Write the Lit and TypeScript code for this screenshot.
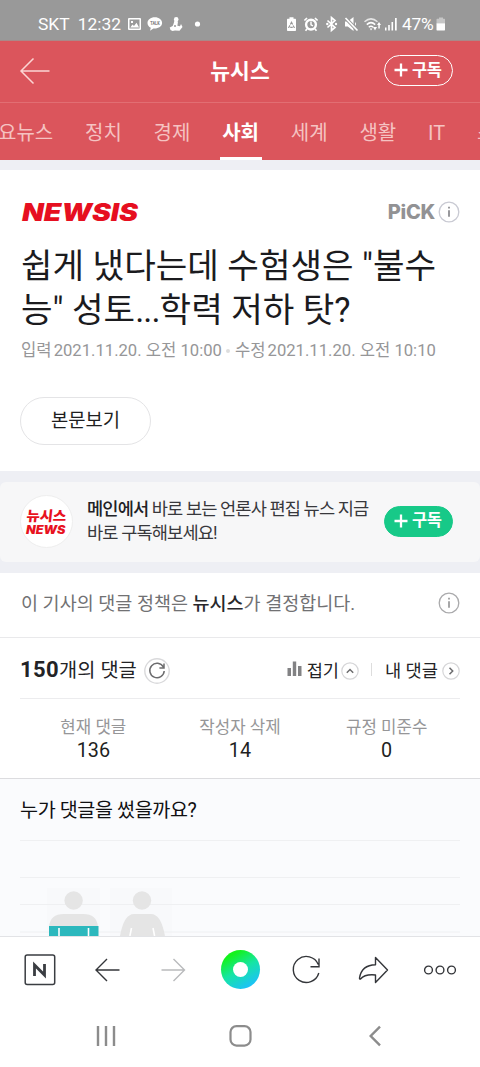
import { LitElement, html, css, svg } from "lit";
import { customElement } from "lit/decorators.js";

const base = css`
  :host { display: block; font-family: Roboto, "Noto Sans CJK KR", sans-serif; }
  * { box-sizing: border-box; }
  svg { display: block; flex: none; overflow: visible; }
  .row { display: flex; align-items: center; }
  .grow { flex: 1; }
`;

@customElement("status-bar")
class StatusBar extends LitElement {
  static styles = [base, css`
    .bar { height: 41px; padding: 8px 34px 0 38px; background: #999; color: #fff; font-size: 17.400px; line-height: 33px; border-bottom: 1px solid #a88; }
    .time { margin-left: 8px; }
    .left { margin-left: 6.500px; }
    .pct { margin-left: 4px; letter-spacing: -0.3px; }
    .batt { margin-left: 2.500px; }
  `];
  render() {
    return html`<div class="bar row">
      <span>SKT</span><span class="time">12:32</span>
      <svg class="left" width="74" height="16" viewBox="0 0 74 16" fill="#fff">
        <path fill-rule="evenodd" d="M2 2h11a1 1 0 0 1 1 1v10a1 1 0 0 1-1 1H2a1 1 0 0 1-1-1V3a1 1 0 0 1 1-1zM2.500 3.400v9.200h10V3.400zM3.300 11.500l2.200-3 1.500 1.600 2.500-3.400 2.600 4.800zM4 5h2v2H4z"/>
        <path d="M27.800 1.300c-4.200 0-7.300 2.500-7.300 5.600 0 2.100 1.300 3.800 3.300 4.800l-.8 3 3.400-2.300c5 .4 8.700-2.200 8.700-5.500 0-3.100-3.100-5.600-7.300-5.600z"/>
        <text x="23.200" y="8.900" font-size="4.500" font-weight="900" fill="#888" textLength="9.500" lengthAdjust="spacingAndGlyphs">TALK</text>
        <circle cx="49.200" cy="3.400" r="2.300"/><path d="M47.500 4.500l3.500 1-.6 4.200 2.600.6 1-2.300 1.500 3-3 3.700-4.500-.2-2.500.5-2-1-.8-2.500 3-1.500.8-2z"/>
        <circle cx="48" cy="10" r="1" fill="#999"/>
        <circle cx="70.500" cy="8" r="2.600"/>
      </svg>
      <div class="grow"></div>
      <svg width="112" height="16" viewBox="0 0 112 16" fill="#fff">
        <path d="M3.500 1.300h4v1.500H9c.6 0 1 .4 1 1V14c0 .6-.4 1-1 1H2c-.6 0-1-.4-1-1V3.800c0-.6.4-1 1-1h1.500z"/>
        <path d="M5.500 6.300l2.600 5H2.900z" fill="none" stroke="#999" stroke-width="1.200" stroke-dasharray="2.500 1"/>
        <circle cx="25" cy="8.600" r="4.900" fill="none" stroke="#fff" stroke-width="2.400"/><path d="M25 5.500v3.300l2 1" fill="none" stroke="#fff" stroke-width="1.400"/>
        <path d="M18.400 4.500L21 2M31.600 4.500L29 2M21 13l-1.500 1.700M29 13l1.500 1.700" stroke="#fff" stroke-width="1.700"/>
        <path d="M41.500 4.500l7.500 7-3.500 3V1.500l3.500 3-7.500 7" fill="none" stroke="#fff" stroke-width="1.700"/><circle cx="41.300" cy="8" r="1.200"/><circle cx="50" cy="8" r="1.200"/>
        <path d="M59 5.500h2.800L67.500 1v14l-5.700-4.500H59zM69 6q2 2 0 4"/><path d="M59.500 2l12 12.500" stroke="#999" stroke-width="3.400"/><path d="M59.500 2l12 12.500" stroke="#fff" stroke-width="1.700"/>
        <g fill="none" stroke="#fff" stroke-width="1.500"><path d="M78.500 5.800q6.500-5.800 13 0" opacity=".75"/><path d="M80.800 8.600q4.200-3.900 8.400 0"/><path d="M82.800 11.200q2.200-2 4.400 0"/></g>
        <path d="M83.800 12.500h2.600L85 14.500zM87 11h4l-2 3.500zM91 9l2-3 2 3h-1.200v3.500h-1.500V9z"/>
        <path d="M99 11.500h1.500v3H99zM102.200 9h1.600v5.500h-1.600zM105.500 6h1.600v8.500h-1.600zM109 2h1.700v12.500H109z"/>
      </svg>
      <span class="pct">47%</span>
      <svg class="batt" width="10" height="16" viewBox="0 0 10 16"><path d="M3 1.500h4v1.300h1.500q.5 0 .5.700v3.800H.500V3.500q0-.7.600-.7H3z" fill="#c6c6c6"/><path d="M.500 7.300H9v6.500q0 .7-.6.700H1.100q-.6 0-.6-.7z" fill="#fff"/></svg>
    </div>`;
  }
}

@customElement("subscribe-pill")
class SubscribePill extends LitElement {
  static styles = [base, css`
    .pill { width: 69px; height: 31px; border-radius: 16px; padding: 0 0 0 9px; color: #fff; font-size: 16.500px; font-weight: 700; letter-spacing: -0.5px; line-height: 28px; gap: 4px; background: #17c988; border: 1px solid #17c988; }
    .pill svg { margin-bottom: 1px; }
    :host([outline]) .pill { background: none; border: 1.500px solid #fff; }
  `];
  render() {
    return html`<div class="pill row"><svg width="14" height="14" viewBox="0 0 14 14"><path d="M7 .5v13M.5 7h13" stroke="#fff" stroke-width="2.300"/></svg><span>구독</span></div>`;
  }
}

@customElement("press-header")
class PressHeader extends LitElement {
  static styles = [base, css`
    .head { background: #db555c; color: #fff; height: 119px; overflow: hidden; }
    .top { display: grid; grid-template-columns: 1fr auto 1fr; align-items: center; height: 62px; padding: 0 27px 1px 20px; border-bottom: 1px solid #e26e73; }
    .name { font-size: 21.500px; font-weight: 700; line-height: 30px; padding: 1px 0 0 7px; }
    .top subscribe-pill { justify-self: end; padding-bottom: 1px; }
    .tabs { display: flex; gap: 31.800px; margin-left: -2px; height: 57px; font-size: 20px; line-height: 61px; color: #f5c3c2; white-space: nowrap; }
    .on { color: #fff; font-weight: 700; padding: 0 2.500px; margin: 0 -2.500px; border-bottom: 3px solid #fff; }
  `];
  render() {
    return html`<div class="head">
      <div class="top">
        <svg width="30" height="28" viewBox="0 0 30 28" fill="none" stroke="#fbd5d3" stroke-width="1.500"><path d="M13.500 1.500L1 14l12.500 12.500M1 14h28.500"/></svg>
        <span class="name">뉴시스</span>
        <subscribe-pill outline></subscribe-pill>
      </div>
      <div class="tabs"><span>요뉴스</span><span>정치</span><span>경제</span><span class="on">사회</span><span>세계</span><span>생활</span><span>IT</span><span>스</span></div>
    </div>`;
  }
}

const info = (size: number, stroke: string, ink: string) => html`<svg width=${size} height=${size} viewBox="0 0 22 22" fill="none"><circle cx="11" cy="11" r="9.800" stroke=${stroke} stroke-width="1.300"/><path d="M11 9.300v6.500M11 5.800v1.700" stroke=${ink} stroke-width="1.500"/></svg>`;

@customElement("article-head")
class ArticleHead extends LitElement {
  static styles = [base, css`
    .card { background: #fff; height: 301px; padding: 28px 20px 0 21px; }
    .brand { height: 28px; padding-bottom: 1px; }
    .wordmark { font-family: Inter, "Open Sans", sans-serif; font-weight: 900; font-style: italic; font-size: 24px; fill: #e60f20; }
    .pick { font-family: Inter, sans-serif; font-weight: 800; font-size: 20px; color: #929294; letter-spacing: -0.3px; margin-right: 3px; line-height: 26px; }
    h1 { margin: 18px 0 0; font-size: 34.300px; font-weight: 400; line-height: 44px; color: #1b1b1e; white-space: nowrap; }
    .dots { letter-spacing: -0.9px; }
    .dates { margin-top: 7px; font-size: 16.650px; line-height: 24px; color: #969698; white-space: nowrap; }
    .dot { width: 4px; height: 4px; border-radius: 2px; background: #ddd; margin: 0 5px 0 4px; }
    .lab { margin-right: 2px; }
    .more { display: flex; justify-content: center; margin: 34px 0 0 -1px; width: 131px; height: 48px; border: 1.500px solid #e4e4e6; border-radius: 24px; font-size: 18.800px; line-height: 47px; color: #1e1e20; }
  `];
  render() {
    return html`<div class="card">
      <div class="brand row">
        <svg width="118" height="20" viewBox="0 0 118 20"><text class="wordmark" x="1" y="18.500" textLength="116" lengthAdjust="spacingAndGlyphs">NEWSIS</text></svg>
        <div class="grow"></div><span class="pick">PiCK</span>${info(22, "#c9cad3", "#77777c")}
      </div>
      <h1>쉽게 냈다는데 수험생은 "불수<br>능" 성토<span class="dots">...</span>학력 저하 탓?</h1>
      <div class="dates row"><span class="lab">입력</span><span>2021.11.20. 오전 10:00</span><i class="dot"></i><span class="lab">수정</span><span>2021.11.20. 오전 10:10</span></div>
      <div class="more">본문보기</div>
    </div>`;
  }
}

@customElement("press-promo")
class PressPromo extends LitElement {
  static styles = [base, css`
    .promo { height: 80px; background: #f7f7f8; border-radius: 6px; padding: 0 27px 2px 20px; }
    .badge { width: 53px; height: 53px; border-radius: 50%; background: #fff; border: 1px solid #eee; display: grid; place-items: center; }
    .ko { font: 900 14px "Noto Sans CJK KR", sans-serif; fill: #e8121f; }
    .en { font: italic 900 11.500px Inter, sans-serif; fill: #e8121f; }
    p { margin: 0 0 0 14px; font-size: 17.600px; letter-spacing: -0.87px; line-height: 24px; color: #38383c; white-space: nowrap; }
    b { font-weight: 500; color: #222226; }
  `];
  render() {
    return html`<div class="promo row">
      <div class="badge"><svg width="42" height="30" viewBox="0 0 42 30"><text class="ko" x="0" y="15" textLength="40" lengthAdjust="spacingAndGlyphs" transform="skewX(-6) translate(1.500 0)">뉴시스</text><text class="en" x="0" y="28" textLength="39.500" lengthAdjust="spacingAndGlyphs">NEWS</text></svg></div>
      <p><b>메인에서</b> 바로 보는 언론사 편집 뉴스 지금<br>바로 구독해보세요!</p>
      <div class="grow"></div><subscribe-pill></subscribe-pill>
    </div>`;
  }
}

@customElement("comment-panel")
class CommentPanel extends LitElement {
  static styles = [base, css`
    .panel { background: #fff; }
    .policy { height: 65px; padding: 0 20px 5px 21px; border-bottom: 1px solid #e9e9eb; color: #717173; font-size: 18.500px; white-space: nowrap; }
    .policy span { margin-bottom: 2px; }
    .policy b { font-weight: 500; color: #28282c; }
    .inner { padding: 0 20px; height: 141px; border-bottom: 1px solid #dcdcdf; }
    .title { height: 61px; padding-top: 5px; border-bottom: 1px solid #ececee; color: #232326; font-size: 17.600px; line-height: 28px; white-space: nowrap; }
    .count { font-size: 19.800px; margin-right: 7px; }
    .count b { font-weight: 700; font-size: 22px; letter-spacing: .4px; }
    .bars { margin-right: 5px; margin-bottom: 4px; }
    .fold { margin-right: 2px; }
    .sep { width: 1px; height: 13px; background: #ddd; margin: 0 13px 3px 12px; }
    .mine { margin-right: 4px; }
    .stats { display: grid; grid-template-columns: repeat(3, 1fr); text-align: center; padding-top: 16px; }
    .k { font-size: 16.800px; line-height: 24px; color: #969698; }
    .v { font-size: 19.800px; line-height: 23px; color: #1f1f22; }
  `];
  render() {
    const stat = (k: string, v: string) => html`<div><div class="k">${k}</div><div class="v">${v}</div></div>`;
    return html`<div class="panel">
      <div class="policy row"><span>이 기사의 댓글 정책은 <b>뉴시스</b>가 결정합니다.</span><div class="grow"></div>${info(22, "#aaaaac", "#8a8a8c")}</div>
      <div class="inner">
        <div class="title row">
          <span class="count"><b>150</b>개의 댓글</span>
          <svg width="26" height="26" viewBox="0 0 26 26" fill="none"><circle cx="13" cy="13" r="12.200" stroke="#d9d9db" stroke-width="1.400"/><path d="M19.300 9A7.200 7.200 0 1 0 20.200 13M20 5.500V10h-4.600" stroke="#6c6c6e" stroke-width="1.500"/></svg>
          <div class="grow"></div>
          <svg class="bars" width="15" height="16" viewBox="0 0 15 16" fill="#828284"><path d="M.500 7H4v8H.500zM5.800.500h3.400V15H5.800zM11 5h3.500v10H11z"/></svg>
          <span class="fold">접기</span>
          <svg width="18" height="18" viewBox="0 0 18 18" fill="none"><circle cx="9" cy="9" r="8.200" stroke="#d6d6d8" stroke-width="1.200"/><path d="M5.800 10.700L9 7.500l3.200 3.200" stroke="#6c6c6e" stroke-width="1.500"/></svg>
          <i class="sep"></i><span class="mine">내 댓글</span>
          <svg width="18" height="18" viewBox="0 0 18 18" fill="none"><circle cx="9" cy="9" r="8.200" stroke="#d6d6d8" stroke-width="1.200"/><path d="M7.500 5.800L10.700 9l-3.200 3.200" stroke="#6c6c6e" stroke-width="1.500"/></svg>
        </div>
        <div class="stats">${stat("현재 댓글", "136")}${stat("작성자 삭제", "14")}${stat("규정 미준수", "0")}</div>
      </div>
    </div>`;
  }
}

@customElement("writer-chart")
class WriterChart extends LitElement {
  static styles = [base, css`
    .box { height: 157px; background: #fafbfd; padding: 0 20px; overflow: hidden; }
    .q { height: 61px; font-size: 19.600px; letter-spacing: -0.4px; line-height: 63px; color: #101012; }
  `];
  render() {
    return html`<div class="box"><div class="q">누가 댓글을 썼을까요?</div>
      <svg width="440" height="96" viewBox="0 0 440 96">
        <path d="M27 48h53v48H27zM90 48h62v48H90z" fill="#f8f9fb"/>
        ${[0.5, 37.5, 64.5, 92].map((y) => svg`<path d="M0 ${y}H440" stroke="#eff0f2"/>`)}
        <g fill="#e5e5e5"><circle cx="53.600" cy="60.500" r="9.200"/><circle cx="122" cy="60.500" r="9.200"/>
          <path d="M29 87q1-13 15-13h19q14 0 15 13zM100 96q4-22 14-22h17q10 0 14 22z"/></g>
        <path d="M29 86h49.500v10H29z" fill="#2cb8bd"/>
        <path d="M39 88V96M68.500 88V96M111.500 88l-1.600 8M133 88l1.600 8" stroke="#fff" stroke-width="1.600" fill="none"/>
      </svg></div>`;
  }
}

@customElement("bottom-bars")
class BottomBars extends LitElement {
  static styles = [base, css`
    .tools { height: 68px; padding-bottom: 2px; background: #fff; border-top: 1px solid #e2e3e6; display: grid; grid-template-columns: repeat(7, 66.670px); justify-content: center; align-items: center; justify-items: center; }
    .nav { height: 63px; background: #fff; display: grid; grid-template-columns: repeat(3, 134.500px); justify-content: center; justify-items: center; align-items: center; }
    .orb { width: 39px; height: 39px; border-radius: 50%; background: linear-gradient(150deg, #14f21c 18%, #16e5a4 50%, #1cc3f5 85%); display: grid; place-items: center; }
    .hole { width: 15px; height: 15px; border-radius: 50%; background: #fff; }
  `];
  render() {
    return html`<div class="tools">
      <svg width="32" height="32" viewBox="0 0 32 32" fill="none" stroke="#3a3d42"><rect x="1.200" y="1" width="29.500" height="29.500" rx="2" stroke-width="1.500"/><path d="M10.500 22V11l10 10V10" stroke-width="2.800"/></svg>
      <svg width="26" height="26" viewBox="0 0 26 26" fill="none" stroke="#34363a" stroke-width="1.400"><path d="M13 2L2 13l11 11M2 13h23.500"/></svg>
      <svg width="26" height="26" viewBox="0 0 26 26" fill="none" stroke="#b9babc" stroke-width="1.400"><path d="M13.500 2l11 11-11 11M24.500 13H1.500"/></svg>
      <div class="orb"><div class="hole"></div></div>
      <svg width="30" height="30" viewBox="0 0 30 30" fill="none" stroke="#34363a" stroke-width="1.400"><path d="M26.300 9.500A13 13 0 1 0 26.800 18M27 3.500v8.300h-8.500"/></svg>
      <svg width="32" height="30" viewBox="0 0 32 30" fill="none" stroke="#34363a" stroke-width="1.400" stroke-linejoin="round"><path d="M18.500 2.500L30.500 15 18.500 27.500V20C12 19.300 7 20 3.500 24Q2.500 24.500 2.500 23C4 14 10 10 18.500 9.800z"/></svg>
      <svg width="34" height="12" viewBox="0 0 34 12" fill="none" stroke="#34363a" stroke-width="1.400"><circle cx="5.500" cy="6" r="3.900"/><circle cx="17" cy="6" r="3.900"/><circle cx="28.500" cy="6" r="3.900"/></svg>
    </div>
    <div class="nav">
      <svg width="20" height="20" viewBox="0 0 20 20" stroke="#8c8c8c" stroke-width="2.400"><path d="M2 0v20M10 0v20M18 0v20"/></svg>
      <svg width="23" height="22" viewBox="0 0 23 22" fill="none" stroke="#8c8c8c" stroke-width="2.200"><rect x="1.500" y="1.100" width="20" height="19.500" rx="6"/></svg>
      <svg width="12" height="20" viewBox="0 0 12 20" fill="none" stroke="#8c8c8c" stroke-width="2.400"><path d="M11 .700L1.700 10l9.300 9.300"/></svg>
    </div>`;
  }
}

@customElement("app-root")
class AppRoot extends LitElement {
  static styles = css`
    :host { display: block; width: 480px; height: 1067px; overflow: hidden; background: #fff; }
    .page { background: #eeeff4; display: flex; flex-direction: column; }
    .stack { display: flex; flex-direction: column; gap: 11px; padding-top: 10px; }
  `;
  render() {
    return html`<div class="page"><status-bar></status-bar><press-header></press-header>
      <div class="stack"><article-head></article-head><press-promo></press-promo><comment-panel></comment-panel></div>
      <writer-chart></writer-chart><bottom-bars></bottom-bars></div>`;
  }
}
